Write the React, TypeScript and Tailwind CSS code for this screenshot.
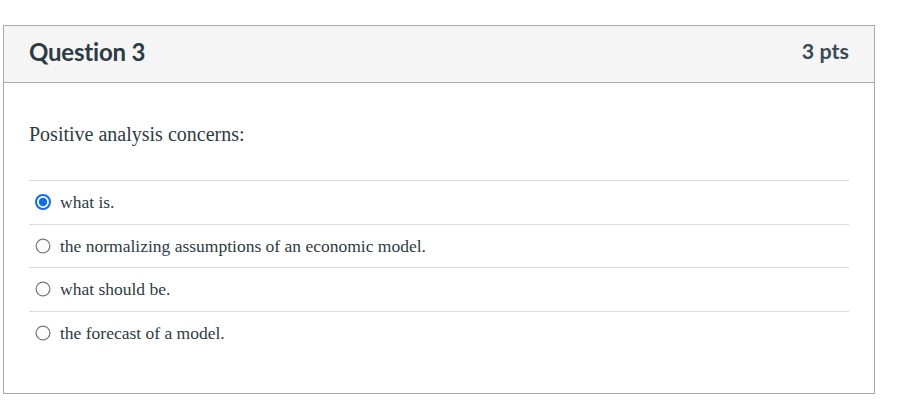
import React from "react";

const answers = [
  { text: "what is.", checked: true },
  { text: "the normalizing assumptions of an economic model.", checked: false },
  { text: "what should be.", checked: false },
  { text: "the forecast of a model.", checked: false },
];

function Radio({ checked }: { checked: boolean }) {
  return checked ? (
    <svg width="16" height="16" viewBox="0 0 16 16" className="shrink-0">
      <circle cx="8" cy="8" r="7" fill="#fff" stroke="#0b6cf2" strokeWidth="2" />
      <circle cx="8" cy="8" r="4.2" fill="#0b6cf2" />
    </svg>
  ) : (
    <svg width="16" height="16" viewBox="0 0 16 16" className="shrink-0">
      <circle cx="8" cy="8" r="6.9" fill="#fff" stroke="#767676" strokeWidth="1.2" />
    </svg>
  );
}

export default function App() {
  return (
    <div className="w-[902px] h-[411px] bg-white pt-[25px] pl-[3px]">
      <div className="w-[872px] h-[369px] border border-[#a9a9a9] flex flex-col">
        <div className="h-[57px] bg-[#f5f5f5] border-b border-[#a9a9a9] flex items-center justify-between pl-[25px] pr-[25px] pb-[5px]">
          <span className="font-['Lato',sans-serif] font-bold text-[24px] text-[#2d3b45] tracking-[-0.2px]">Question 3</span>
          <span className="font-['Lato',sans-serif] font-bold text-[21.5px] text-[#3c4a55]">3 pts</span>
        </div>
        <div className="px-[25px] pt-[37px]">
          <p className="font-['Liberation_Serif',serif] text-[20px] leading-[28px] text-[#2d3b45]">Positive analysis concerns:</p>
          <div className="mt-[32px]">
            {answers.map((a, i) => (
              <div
                key={i}
                className="flex items-center h-[43.5px] pl-[6px] gap-[9px] border-t border-[#dcdcdc]"
              >
                <Radio checked={a.checked} />
                <span className="font-['Liberation_Serif',serif] text-[17.5px] leading-[20px] text-[#2d3b45]">{a.text}</span>
              </div>
            ))}
          </div>
        </div>
      </div>
    </div>
  );
}
